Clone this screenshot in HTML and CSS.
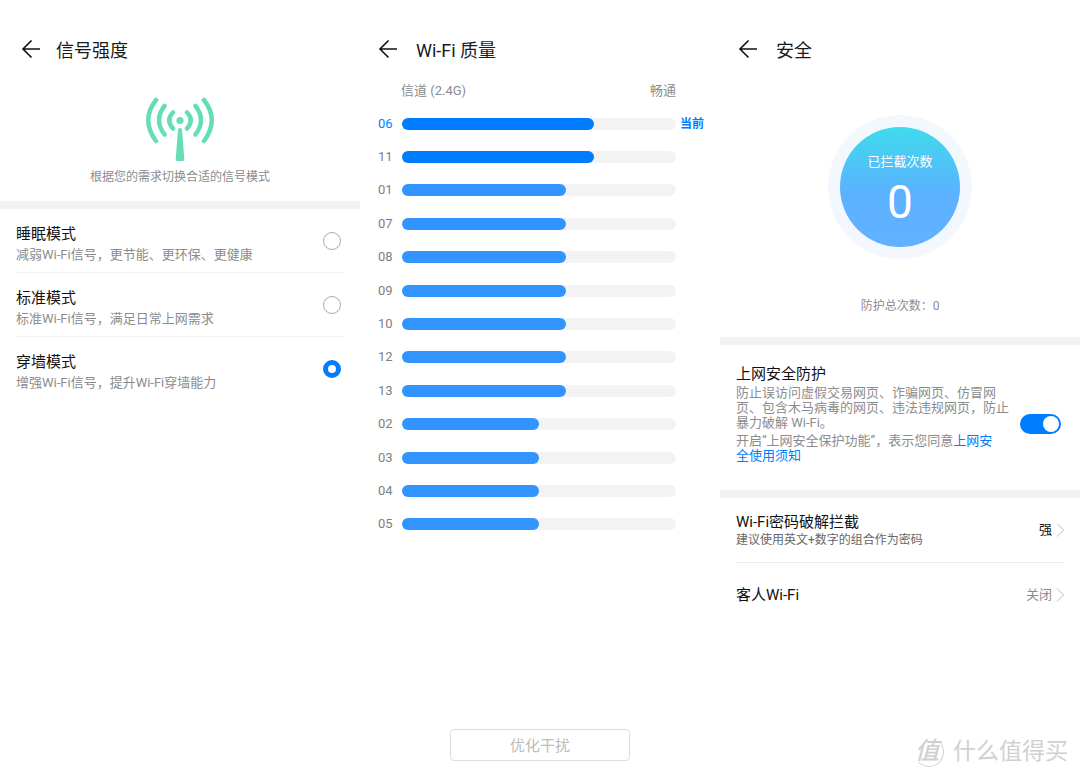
FILE: index.html
```html
<!DOCTYPE html>
<html lang="zh-CN">
<head>
<meta charset="utf-8">
<meta name="viewport" content="width=device-width, initial-scale=1">
<title>路由器设置</title>
<link rel="stylesheet" href="styles.css">
</head>
<body>
<main class="screens">
  <section class="screen screen-signal">
    <header class="bar">
      <button class="back" type="button" aria-label="返回"><svg viewBox="0 0 20 20" width="20" height="20"><path d="M10.500 1.500 2 10l8.500 8.500M2 10h17"/></svg></button>
      <h1>信号强度</h1>
    </header>
    <div class="hero">
      <svg class="antenna" viewBox="0 0 70 66" width="70" height="66" aria-hidden="true">
        <g class="waves"><path d="M28 16.500Q20.500 24 28 32.500M19.500 10Q8.500 24 19.500 38.500M11 4Q-4.500 24 11 45M42 16.500Q49.500 24 42 32.500M50.500 10Q61.500 24 50.500 38.500M59 4Q74.500 24 59 45"/></g>
        <circle cx="35" cy="24.500" r="3.600"/>
        <path d="M33 33.500Q33 32 35 32T37 33.500L39.300 63.500Q39.300 65 37.500 65H32.500Q30.700 65 30.700 63.500Z"/>
      </svg>
      <p>根据您的需求切换合适的信号模式</p>
    </div>
    <div class="options">
      <label class="option"><span class="copy"><span class="name">睡眠模式</span><span class="note">减弱Wi-Fi信号，更节能、更环保、更健康</span></span><input type="radio" name="mode"></label>
      <label class="option"><span class="copy"><span class="name">标准模式</span><span class="note">标准Wi-Fi信号，满足日常上网需求</span></span><input type="radio" name="mode"></label>
      <label class="option"><span class="copy"><span class="name">穿墙模式</span><span class="note">增强Wi-Fi信号，提升Wi-Fi穿墙能力</span></span><input type="radio" name="mode" checked></label>
    </div>
  </section>

  <section class="screen">
    <header class="bar">
      <button class="back" type="button" aria-label="返回"><svg viewBox="0 0 20 20" width="20" height="20"><path d="M10.500 1.500 2 10l8.500 8.500M2 10h17"/></svg></button>
      <h1>Wi-Fi 质量</h1>
    </header>
    <div class="legend"><span>信道 (2.4G)</span><span>畅通</span></div>
    <ul class="channels">
      <li class="high current"><span>06</span><div class="track"><div class="fill" style="width:70%"></div></div><strong>当前</strong></li>
      <li class="high"><span>11</span><div class="track"><div class="fill" style="width:70%"></div></div></li>
      <li><span>01</span><div class="track"><div class="fill" style="width:60%"></div></div></li>
      <li><span>07</span><div class="track"><div class="fill" style="width:60%"></div></div></li>
      <li><span>08</span><div class="track"><div class="fill" style="width:60%"></div></div></li>
      <li><span>09</span><div class="track"><div class="fill" style="width:60%"></div></div></li>
      <li><span>10</span><div class="track"><div class="fill" style="width:60%"></div></div></li>
      <li><span>12</span><div class="track"><div class="fill" style="width:60%"></div></div></li>
      <li><span>13</span><div class="track"><div class="fill" style="width:60%"></div></div></li>
      <li><span>02</span><div class="track"><div class="fill" style="width:50%"></div></div></li>
      <li><span>03</span><div class="track"><div class="fill" style="width:50%"></div></div></li>
      <li><span>04</span><div class="track"><div class="fill" style="width:50%"></div></div></li>
      <li><span>05</span><div class="track"><div class="fill" style="width:50%"></div></div></li>
    </ul>
    <button class="optimize" type="button">优化干扰</button>
  </section>

  <section class="screen">
    <header class="bar">
      <button class="back" type="button" aria-label="返回"><svg viewBox="0 0 20 20" width="20" height="20"><path d="M10.500 1.500 2 10l8.500 8.500M2 10h17"/></svg></button>
      <h1>安全</h1>
    </header>
    <div class="shield">
      <div class="ring"><div class="disc"><span>已拦截次数</span><b>0</b></div></div>
      <p>防护总次数：0</p>
    </div>
    <div class="protect">
      <h2 class="name" id="protect-name">上网安全防护</h2>
      <div class="protect-body">
        <div class="protect-text">
          <p>防止误访问虚假交易网页、诈骗网页、仿冒网页、包含木马病毒的网页、违法违规网页，防止暴力破解 Wi-Fi。</p>
          <p class="consent">开启“上网安全保护功能”，表示您同意<a href="#terms">上网安全使用须知</a></p>
        </div>
        <input class="switch" type="checkbox" role="switch" aria-labelledby="protect-name" checked>
      </div>
    </div>
    <div class="links">
      <button class="link-row" type="button"><span class="copy"><span class="name">Wi-Fi密码破解拦截</span><span class="hint">建议使用英文+数字的组合作为密码</span></span><span class="value strong">强</span><svg class="chevron" viewBox="0 0 8 14" width="8" height="14"><path d="M1 .5 7.500 7 1 13.500"/></svg></button>
      <button class="link-row" type="button"><span class="copy"><span class="name">客人Wi-Fi</span></span><span class="value">关闭</span><svg class="chevron" viewBox="0 0 8 14" width="8" height="14"><path d="M1 .5 7.500 7 1 13.500"/></svg></button>
    </div>
    <footer class="brand"><span class="seal">值</span><span>什么值得买</span></footer>
  </section>
</main>
</body>
</html>
```
FILE: styles.css
```css
* { box-sizing: border-box; }
body, h1, h2, p, ul { margin: 0; padding: 0; }
body {
  background: #fff;
  color: #1a1a1a;
  font-family: Roboto, "Noto Sans CJK SC", sans-serif;
  font-size: 13px;
  line-height: 20px;
}
button { border: 0; padding: 0; background: none; color: inherit; font: inherit; text-align: left; }
input { appearance: none; margin: 0; flex: none; }

.screens { display: grid; grid-template-columns: repeat(3, minmax(0, 1fr)); min-height: 100vh; }
.screen { display: flex; flex-direction: column; min-width: 0; }

.bar { display: flex; align-items: center; gap: 18px; padding: 36px 18px 0; }
.screen-signal .bar { padding-left: 21px; gap: 15px; }
.bar h1 { padding-top: 1px; font-size: 18px; line-height: 28px; font-weight: 400; }
.back { display: flex; padding-bottom: 3px; }
.back svg { fill: none; stroke: #111; stroke-width: 1.6; }

.hero { display: flex; flex-direction: column; align-items: center; padding: 31px 16px 14px; gap: 5px; border-bottom: 8px solid #f2f2f2; }
.hero p { font-size: 12px; color: #8c8c8c; }
.antenna { fill: #65deb5; }
.waves { fill: none; stroke: #65deb5; stroke-width: 4.5; stroke-linecap: round; }

.options { padding: 0 16px; }
.option { display: flex; align-items: center; justify-content: space-between; min-height: 64px; border-bottom: 1px solid #f2f2f2; padding-right: 3px; }
.option:last-child { border-bottom-color: transparent; }
.option .copy { padding-top: 8px; gap: 1px; }
.copy { display: flex; flex-direction: column; }
.name { font-size: 15px; line-height: 20px; font-weight: 400; color: #111; }
.note { color: #8c8c8c; }
.option input { width: 18px; height: 18px; border: 1px solid #aaa; border-radius: 50%; }
.option input:checked { border: 5px solid #007dff; }

.legend { display: flex; justify-content: space-between; padding: 16px 44px 6px 41px; color: #8c8c8c; }
.channels { list-style: none; display: grid; grid-auto-rows: 1fr; min-height: 434px; padding: 0 16px 0 18px; }
.channels li { display: grid; grid-template-columns: 24px minmax(0, 1fr) 28px; align-items: center; color: #808080; }
.channels .current { color: #007dff; }
.channels strong { font-size: 12px; padding-left: 4px; white-space: nowrap; }
.track { height: 12px; border-radius: 6px; background: #f3f3f3; }
.fill { height: 100%; border-radius: 6px; background: #3295ff; }
.high .fill { background: #007dff; }
.optimize { margin: auto auto 16px; padding-top: 2px; width: 50%; height: 32px; border: 1px solid #dcdcdc; border-radius: 4px; color: #bcbcbc; font-size: 15px; text-align: center; }

.shield { display: flex; flex-direction: column; align-items: center; gap: 37px; padding: 50px 16px 21px; border-bottom: 8px solid #f2f2f2; }
.shield p { font-size: 12px; color: #8c8c8c; }
.ring { padding: 12px; border-radius: 50%; background: #f3f8fe; }
.disc { display: flex; flex-direction: column; align-items: center; width: 120px; height: 120px; padding-top: 25px; border-radius: 50%; background: linear-gradient(#3edbec, #5cb2ff 55%, #62b1ff); color: #fff; }
.disc b { font-size: 46px; line-height: 60px; font-weight: 400; }

.protect { padding: 19px 16px 27px; border-bottom: 8px solid #f2f2f2; }
.protect-body { display: flex; align-items: center; justify-content: space-between; gap: 8px; padding-right: 3px; }
.protect-text { flex: 0 1 276px; padding-top: 1px; line-height: 15px; color: #8c8c8c; }
.consent { margin-top: 3px; padding-right: 16px; }
.consent a { color: #007dff; text-decoration: none; }
.switch { width: 41px; height: 20px; padding: 2px; border-radius: 10px; background: #007dff; }
.switch::before { content: ""; display: block; width: 16px; height: 16px; border-radius: 50%; background: #fff; }
.switch:checked::before { margin-left: auto; }

.links { display: flex; flex-direction: column; padding: 0 16px; }
.link-row { display: flex; align-items: center; gap: 4px; min-height: 65px; border-bottom: 1px solid #ececec; }
.link-row:last-child { min-height: 64px; border-bottom: 0; }
.link-row .copy { flex: 1; }
.hint { font-size: 12px; line-height: 16px; color: #666; }
.value { color: #8c8c8c; }
.value.strong { color: #111; }
.chevron { fill: none; stroke: #bbb; stroke-width: 1; }

.brand { display: flex; justify-content: flex-end; align-items: center; gap: 9px; margin-top: auto; padding: 0 12px 10px; color: #d0d0d0; font-size: 23px; line-height: 30px; }
.seal { width: 30px; height: 30px; padding-right: 4px; border: 1px solid #d0d0d0; border-left-color: transparent; border-top-color: transparent; border-radius: 50%; font-size: 24px; line-height: 27px; font-style: italic; font-weight: 500; text-align: center; }
```
